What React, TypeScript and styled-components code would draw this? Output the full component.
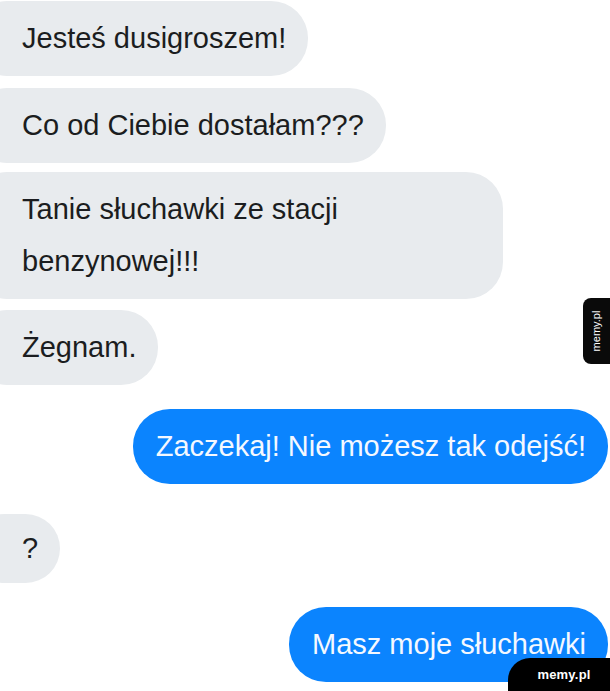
import React from "react";
import styled, { createGlobalStyle } from "styled-components";

const Global = createGlobalStyle`
  html, body { margin: 0; padding: 0; background: #ffffff; }
  body { width: 610px; height: 691px; overflow: hidden; }
`;

const Page = styled.div`
  position: relative;
  width: 610px;
  height: 691px;
  overflow: hidden;
  background: #ffffff;
  display: flex;
  flex-direction: column;
  font-family: "Liberation Sans", Arial, Helvetica, sans-serif;
`;

const Bubble = styled.div<{ $mine?: boolean; $top: number; $compact?: boolean; $width?: number }>`
  align-self: ${(p) => (p.$mine ? "flex-end" : "flex-start")};
  margin-top: ${(p) => p.$top}px;
  margin-left: ${(p) => (p.$mine ? "0" : "-30px")};
  margin-right: ${(p) => (p.$mine ? "2px" : "0")};
  ${(p) => (p.$width ? `width: ${p.$width}px;` : "")}
  padding: ${(p) => (p.$compact ? "8px" : "11px")} 22px
    ${(p) => (p.$compact ? "9px" : "12px")}
    ${(p) => (p.$mine ? "23px" : "52px")};
  box-sizing: border-box;
  border-radius: 37px;
  background: ${(p) => (p.$mine ? "#0b84fe" : "#e8ebee")};
  color: ${(p) => (p.$mine ? "#f4f8ff" : "#1b1d20")};
  font-size: 29px;
  line-height: 52px;
  white-space: pre-line;
`;

const SideMark = styled.div`
  position: absolute;
  right: 0;
  top: 298px;
  width: 27px;
  height: 66px;
  background: #0a0a0a;
  border-radius: 8px 0 0 8px;
  display: flex;
  align-items: center;
  justify-content: center;
`;

const SideText = styled.span`
  display: block;
  transform: rotate(-90deg);
  white-space: nowrap;
  color: #ffffff;
  font-family: "Liberation Sans", Arial, sans-serif;
  font-size: 11px;
`;

const CornerMark = styled.div`
  position: absolute;
  right: 0;
  bottom: 0;
  width: 102px;
  height: 33px;
  background: #000000;
  border-radius: 22px 0 0 0;
  display: flex;
  align-items: center;
  justify-content: center;
  padding-left: 10px;
  box-sizing: border-box;
  color: #ffffff;
  font-family: "Liberation Sans", Arial, sans-serif;
  font-size: 13px;
  font-weight: 700;
  letter-spacing: 0.2px;
`;

const messages: { text: string; mine?: boolean; top: number; compact?: boolean; width?: number }[] = [
  { text: "Jesteś dusigroszem!", top: 1 },
  { text: "Co od Ciebie dostałam???", top: 12 },
  { text: "Tanie słuchawki ze stacji\nbenzynowej!!!", top: 9, width: 533 },
  { text: "Żegnam.", top: 11 },
  { text: "Zaczekaj! Nie możesz tak odejść!", mine: true, top: 24 },
  { text: "?", top: 30, compact: true },
  { text: "Masz moje słuchawki", mine: true, top: 24 },
];

export default function App() {
  return (
    <>
      <Global />
      <Page>
        {messages.map((m, i) => (
          <Bubble key={i} $mine={m.mine} $top={m.top} $compact={m.compact} $width={m.width}>
            {m.text}
          </Bubble>
        ))}
        <SideMark>
          <SideText>memy.pl</SideText>
        </SideMark>
        <CornerMark>memy.pl</CornerMark>
      </Page>
    </>
  );
}
